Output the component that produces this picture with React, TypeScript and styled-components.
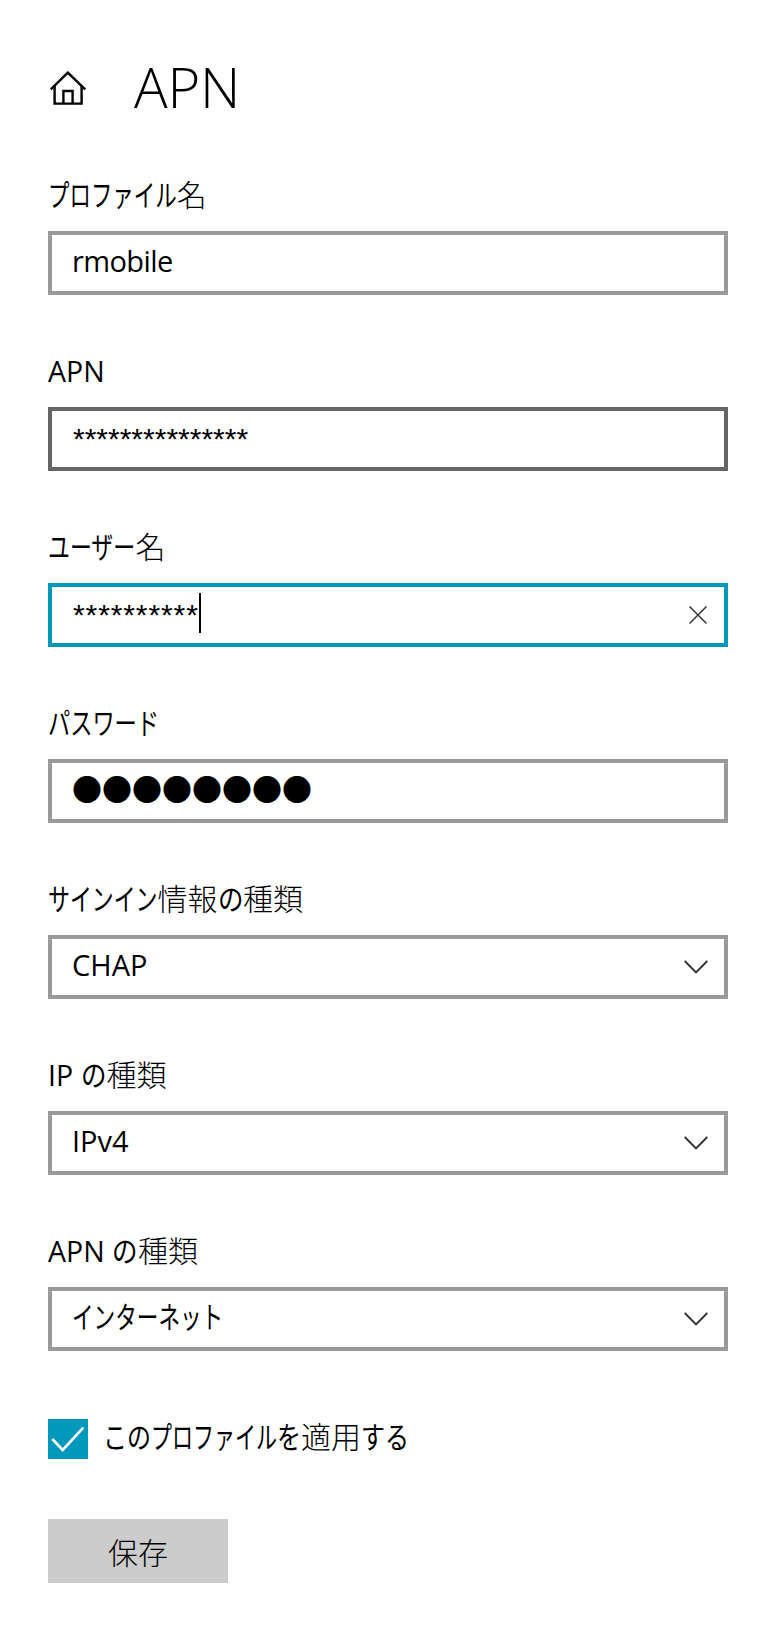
import React from "react";
import styled, { createGlobalStyle } from "styled-components";

const Global = createGlobalStyle`
  html, body { margin: 0; padding: 0; background: #fff; }
`;

const sans = `"Open Sans", "Noto Sans CJK JP", sans-serif`;

const Page = styled.main`
  width: 780px;
  height: 1631px;
  box-sizing: border-box;
  padding: 46px 52px 48px 48px;
  display: flex;
  flex-direction: column;
  font-family: ${sans};
  color: #000;
`;

const Header = styled.header`
  height: 80px;
  display: flex;
  align-items: center;
  gap: 48px;
  padding-left: 2px;
  margin-bottom: 49px;
`;

const HomeIcon = styled.svg`
  margin-top: 3px;
  flex: none;
`;

const Title = styled.h1`
  margin: 0;
  font-size: 56px;
  line-height: 80px;
  font-weight: 300;
  letter-spacing: -0.2px;
`;

const Form = styled.form`
  display: flex;
  flex-direction: column;
  gap: 56px;
`;

const Field = styled.div`
  display: flex;
  flex-direction: column;
  gap: 16px;
`;

const Label = styled.label`
  font-size: 30px;
  line-height: 40px;
  height: 40px;
  font-weight: 300;
  white-space: nowrap;
`;

const Latin = styled.span`
  font-size: 28.5px;
  font-weight: 400;
`;

/* Stands in for the condensed kana of the original UI font. */
const Kana = styled.span<{ $count: number; $scale?: number }>`
  display: inline-block;
  white-space: nowrap;
  vertical-align: baseline;
  font-weight: 400;
  width: ${(p) => p.$count * (p.$scale ?? 0.73)}em;
  transform: scaleX(${(p) => p.$scale ?? 0.73});
  transform-origin: left center;
`;

const Box = styled.div<{ $tone?: "idle" | "hover" | "focus" }>`
  height: 64px;
  box-sizing: border-box;
  border: 4px solid
    ${(p) => (p.$tone === "focus" ? "#0099bc" : p.$tone === "hover" ? "#666666" : "#999999")};
  padding: 0 16px 0 20px;
  display: flex;
  align-items: center;
  background: #fff;
`;

const Value = styled.span<{ $spacing?: number }>`
  font-size: 29px;
  line-height: 40px;
  margin-bottom: 4px;
  white-space: nowrap;
  letter-spacing: ${(p) => p.$spacing ?? 0}px;
`;

const JaValue = styled.span`
  font-size: 30px;
  line-height: 40px;
  margin-bottom: 4px;
  white-space: nowrap;
`;

const Stars = styled.span<{ $pitch: number }>`
  font-family: "Liberation Sans", sans-serif;
  font-size: 30px;
  line-height: 40px;
  padding-left: 1px;
  white-space: nowrap;
  letter-spacing: ${(p) => p.$pitch}px;
`;

const Dots = styled.span`
  font-family: "Noto Sans CJK JP", sans-serif;
  font-size: 30px;
  line-height: 40px;
  margin-bottom: 6px;
  white-space: nowrap;
`;

const Caret = styled.span`
  width: 2px;
  height: 40px;
  margin-bottom: 4px;
  background: #000;
  flex: none;
`;

const TrailingIcon = styled.svg<{ $inset?: number }>`
  margin-left: auto;
  margin-right: ${(p) => p.$inset ?? 0}px;
  flex: none;
  color: #333;
`;

const CheckRow = styled.div`
  display: flex;
  align-items: center;
  gap: 15px;
  margin-top: 68px;
`;

const CheckBox = styled.span`
  width: 40px;
  height: 40px;
  background: #0099bc;
  display: block;
  flex: none;
`;

const CheckLabel = styled.span`
  font-size: 30px;
  line-height: 36px;
  margin-bottom: 4px;
  font-weight: 300;
  white-space: nowrap;
`;

const SaveButton = styled.button`
  margin-top: 60px;
  width: 180px;
  height: 64px;
  border: 0;
  background: #cccccc;
  color: #000;
  font-family: ${sans};
  font-size: 30px;
  font-weight: 300;
  padding: 0;
`;

const Chevron = () => (
  <TrailingIcon width="24" height="14" viewBox="0 0 24 14" fill="none">
    <path d="M0.7 1 L12 12.4 L23.3 1" stroke="currentColor" strokeWidth="2" />
  </TrailingIcon>
);

const Clear = () => (
  <TrailingIcon $inset={1} width="18" height="18" viewBox="0 0 18 18" fill="none">
    <path d="M0.5 0.5 L17.5 17.5 M17.5 0.5 L0.5 17.5" stroke="currentColor" strokeWidth="1.5" />
  </TrailingIcon>
);

export default function App() {
  return (
    <Page>
      <Global />
      <Header>
        <HomeIcon width="36" height="34" viewBox="0 0 36 34" fill="none" stroke="#000" strokeWidth="2.4">
          <path d="M0.8 18.4 L17.8 1.6 L35.2 18.4" />
          <path d="M4.6 14.5 V32.6 H31.6 V14.5" />
          <path d="M13.4 32.6 V20 H22.6 V32.6" />
        </HomeIcon>
        <Title>APN</Title>
      </Header>
      <Form>
        <Field>
          <Label><Kana $count={6} $scale={0.715}>プロファイル</Kana>名</Label>
          <Box><Value $spacing={-0.6}>rmobile</Value></Box>
        </Field>
        <Field>
          <Label><Latin>APN</Latin></Label>
          <Box $tone="hover"><Stars $pitch={0}>***************</Stars></Box>
        </Field>
        <Field>
          <Label><Kana $count={4}>ユーザー</Kana>名</Label>
          <Box $tone="focus">
            <Stars $pitch={0.9}>**********</Stars>
            <Caret />
            <Clear />
          </Box>
        </Field>
        <Field>
          <Label><Kana $count={5} $scale={0.74}>パスワード</Kana></Label>
          <Box><Dots>●●●●●●●●</Dots></Box>
        </Field>
        <Field>
          <Label><Kana $count={5}>サインイン</Kana>情報<Kana $count={1} $scale={0.85}>の</Kana>種類</Label>
          <Box><Value>CHAP</Value><Chevron /></Box>
        </Field>
        <Field>
          <Label><Latin>IP</Latin> <Kana $count={1} $scale={0.85}>の</Kana>種類</Label>
          <Box><Value>IPv4</Value><Chevron /></Box>
        </Field>
        <Field>
          <Label><Latin>APN</Latin> <Kana $count={1} $scale={0.85}>の</Kana>種類</Label>
          <Box><JaValue><Kana $count={7} $scale={0.72}>インターネット</Kana></JaValue><Chevron /></Box>
        </Field>
      </Form>
      <CheckRow>
        <CheckBox>
          <svg width="40" height="40" viewBox="0 0 40 40" fill="none">
            <path d="M4.3 20 L14.7 31 L35.3 8.7" stroke="#fff" strokeWidth="2.6" />
          </svg>
        </CheckBox>
        <CheckLabel>
          <Kana $count={2} $scale={0.8}>この</Kana>
          <Kana $count={6} $scale={0.7}>プロファイル</Kana>
          <Kana $count={1} $scale={0.8}>を</Kana>適用
          <Kana $count={2} $scale={0.8}>する</Kana>
        </CheckLabel>
      </CheckRow>
      <SaveButton type="button">保存</SaveButton>
    </Page>
  );
}
